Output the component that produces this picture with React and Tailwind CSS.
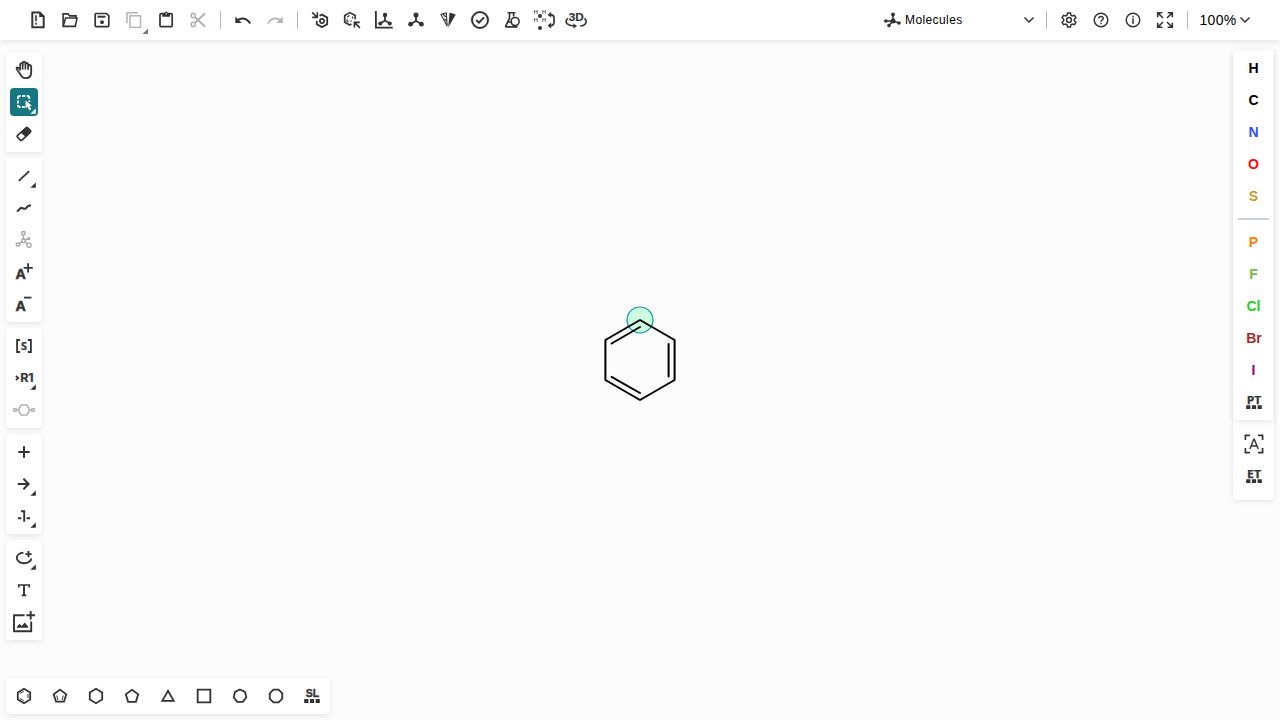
import React from "react";

const DARK = "#333333";
const GRAY = "#b4b4b4";

function Icon({ children, color = DARK, w = 2, size = "size-8" }) {
  return (
    <svg
      viewBox="-16 -16 32 32"
      className={`${size} shrink-0 overflow-visible`}
      fill="none"
      stroke={color}
      strokeWidth={w}
    >
      {children}
    </svg>
  );
}

function Corner({ color = DARK }) {
  return <path d="M11.8 6.5V11.8H6.3Z" fill={color} stroke="none" />;
}

function Glyph({ x = 0, y, size, children, weight = 700, family = "Open Sans", width, bold = 0.25 }) {
  return (
    <text
      x={x}
      y={y}
      fontSize={size}
      fontWeight={weight}
      fontFamily={`"${family}", sans-serif`}
      textAnchor="middle"
      textLength={width}
      lengthAdjust="spacingAndGlyphs"
      fill={DARK}
      stroke={bold ? DARK : "none"}
      strokeWidth={bold}
      opacity="0.99"
    >
      {children}
    </text>
  );
}

function Dots({ y = 4.2 }) {
  return (
    <path
      d={`M-7.8 ${y}h4.2v3.8h-4.2zM-2.1 ${y}h4.2v3.8h-4.2zM3.6 ${y}h4.2v3.8h-4.2z`}
      fill={DARK}
      stroke="none"
    />
  );
}

const Divider = () => <div className="h-[18px] w-px shrink-0 bg-[#aeb6dc]" />;

function Chevron() {
  return (
    <svg viewBox="0 0 12 8" className="h-2 w-3 shrink-0" fill="none" stroke={DARK} strokeWidth="1.5">
      <path d="M1.5 1.5 6 6l4.5-4.5" />
    </svg>
  );
}

function TopBar() {
  return (
    <header className="flex h-10 shrink-0 items-center bg-white pl-[22px] shadow-[0_2px_5px_rgba(103,104,132,0.15)]">
      <Icon>
        <path d="M-5.7-7.5H1.7L5.7-3.5V7.2H-5.7Z" />
        <path d="M1.2-8V-3H6.4Z" fill={DARK} stroke="none" />
        <path d="M-2-4.8V1.3M-2 2.7V4.8" strokeWidth="1.6" />
      </Icon>
      <Icon w={1.6}>
        <path d="M-6.9 5.8V-6.1H-2L-.3-4.1H6V-1.9" />
        <path d="M-6.8 6.4-4.4-2H7L5.3 6.4Z" />
      </Icon>
      <Icon w={1.7}>
        <path d="M-5.8-6.5H4.4L6.8-4.1V5.4Q6.8 6.7 5.5 6.7H-5.5Q-6.8 6.7-6.8 5.4V-5.5Q-6.8-6.5-5.8-6.5Z" />
        <path d="M-4.5-3.3H3.5" strokeWidth="2" />
        <circle cx="0" cy="2.2" r="1.9" fill={DARK} stroke="none" />
      </Icon>
      <Icon color={GRAY} w={1.5}>
        <path d="M-7 3.2V-7.2H3.8" />
        <rect x="-4" y="-4.2" width="10.5" height="11.6" />
        <path d="M14 8.5V14H8.5Z" fill="#777" stroke="none" />
      </Icon>
      <Icon w={1.7}>
        <rect x="-6" y="-6.3" width="12.2" height="12.9" rx="1" />
        <path d="M-3.8-6.8H-1.5Q-1.2-8.5.1-8.5T1.7-6.8H4V-3.3H-3.8Z" fill={DARK} stroke="none" />
        <circle cx=".1" cy="-6.2" r=".8" fill="white" stroke="none" />
      </Icon>
      <Icon color={GRAY} w={1.6}>
        <circle cx="-4.7" cy="-4.4" r="2.2" />
        <circle cx="-4.7" cy="4.4" r="2.2" />
        <path d="M-3-2.7 7.2 6.7M-3 2.7 7.2-6.7" strokeWidth="2" />
      </Icon>
      <div className="ml-1.5"><Divider /></div>
      <div className="ml-[6px] flex">
        <Icon w={2}>
          <path d="M-6 .4Q1.5-4.6 7.2 3.4" />
          <path d="M-7.7-3.4V3.1H-1.2Z" fill={DARK} stroke="none" />
        </Icon>
        <Icon color={GRAY} w={1.7}>
          <path d="M6 .4Q-1.5-4.6-7.2 3.4" />
          <path d="M7.7-3.4V3.1H1.2Z" fill={GRAY} stroke="none" />
        </Icon>
      </div>
      <div className="ml-1.5"><Divider /></div>
      <div className="ml-[6px] flex">
        <Icon w={1.8}>
          <path d="M-.5-4.2 2-5.4 7.2-2.4V4.2L2 7.1-3.2 4.2V1" />
          <circle cx="2" cy="1" r="2.1" strokeWidth="1.7" />
          <path d="M-7.8-7.6-3.4-3.2M-7.8-2.6H-2.7V-7.8" strokeWidth="1.6" />
        </Icon>
        <Icon w={1.7}>
          <path d="M3.2-.8V-4.5L-2.2-7.4-7.3-4.5V2.2L-2.2 5-.6 4.1" />
          <path d="M-4.9-2.9-2.5-4.4M-4.9-.8V1.1L-3.4 2.1M-1.6 1.6-.4.8M.6-3.6V-1.4" strokeWidth="1.2" />
          <path d="M7.9 7.9 3.2 3.2M2.4 7.6V2.3H7.8" />
        </Icon>
        <Icon w={1.8}>
          <path d="M-8.1-9V7.7H8.8" />
          <path d="M1-5V.5L-3.6 3.2M1 .5 5.5 3.2" />
          <g fill={DARK} stroke="none"><circle cx="1" cy="-5.1" r="2.2" /><circle cx="-3.8" cy="3.4" r="2" /><circle cx="5.8" cy="3.4" r="2" /></g>
        </Icon>
        <Icon w={1.9}>
          <path d="M0-5V1L-5.4 4M0 1 5.4 4" />
          <g fill={DARK} stroke="none"><circle cx="0" cy="-5" r="2.5" /><circle cx="-5.4" cy="4.2" r="2.4" /><circle cx="5.4" cy="4.2" r="2.4" /></g>
        </Icon>
        <Icon w={1.1}>
          <path d="M-7-5.6-.8 6.2-1.7-7Z" />
          <path d="M-5-6-2.2-3M-3.6-1.2-1.4 1" />
          <path d="M1.6-7.5 7.8-5.6.2 7.4Z" fill={DARK} stroke="none" />
        </Icon>
        <Icon w={2}>
          <circle cx="0" cy="0" r="8" />
          <path d="M-3.8 0-1 2.7 4-2.6" />
        </Icon>
        <Icon w={1.6}>
          <path d="M-4.4-7.3H3.4M-2.5-7V-1.8L-6.3 6.1Q-6.5 6.9-5.6 6.9H5.5M1.6-7V-3.5" />
          <circle cx="3.1" cy="1.5" r="4" />
          <path d="M-4 2H-1M1 5.2 4 7" />
        </Icon>
        <Icon w={1.7}>
          {[[-8.2, -6], [-.1, -6], [-8.2, 2], [-.1, 2]].map(([x, y]) => (
            <Glyph key={`${x},${y}`} x={x} y={y} size={6} weight={400} bold={0.15}>H</Glyph>
          ))}
          <circle cx="-4" cy="-4" r="2" fill={DARK} stroke="none" />
          <circle cx="-4" cy="8" r="2" fill={DARK} stroke="none" />
          <path d="M5.2-5.2H7Q10-5.2 10-2V2Q10 5.6 6.8 5.6H5.6" />
          <path d="M7.2-8.2V-2.2L3.6-5.2ZM7.2 2.6V8.6L3.6 5.6Z" fill={DARK} stroke="none" />
        </Icon>
        <Icon w={1.6}>
          <Glyph x={.3} y={0.6} size={11.8} family="Liberation Sans" width={15} bold={0.2}>3D</Glyph>
          <path d="M-8.2-1.6C-12.8 2.5-7.8 5.8-2.2 6M8.4-1.6C12.8 2.5 8.4 5.8 4.2 6" />
          <path d="M-2.6 3.4 1 6-2.6 8.6Z" fill={DARK} stroke="none" />
        </Icon>
      </div>
      <div className="flex-1" />
      <div className="flex w-[153px] items-center pl-[1px]">
        <svg viewBox="-9 -9 18 18" className="-mr-px size-[18px] shrink-0 overflow-visible" fill={DARK} stroke={DARK} strokeWidth="1.5">
          <path d="M1-5.5V1L-6 1M1 1-3 5.3M1 1 7 3" fill="none" />
          <g stroke="none"><circle cx="1" cy="-5.5" r="1.9" /><circle cx="-6.2" cy="1" r="1.8" /><circle cx="1" cy="1" r="2.5" /><circle cx="-3" cy="5.6" r="1.8" /><circle cx="7" cy="3" r="1.8" /></g>
        </svg>
        <span className="ml-[5px] font-['Liberation_Sans',sans-serif] text-[12px] leading-5 tracking-[0.4px] text-black">Molecules</span>
        <div className="ml-auto flex"><Chevron /></div>
      </div>
      <div className="ml-[11px]"><Divider /></div>
      <div className="ml-[6px] flex">
        <Icon w={1.5}>
          <path d="M-1.4-7H1.4L2-4.8 3.3-4.1 5.5-4.7 6.9-2.3 5.3-.7V.7L6.9 2.3 5.5 4.7 3.3 4.1 2 4.8 1.4 7H-1.4L-2 4.8-3.3 4.1-5.5 4.7-6.9 2.3-5.3.7V-.7L-6.9-2.3-5.5-4.7-3.3-4.1-2-4.8Z" />
          <circle cx="0" cy="0" r="2.4" />
        </Icon>
        <Icon w={1.5}>
          <circle cx="0" cy="0" r="6.8" />
          <path d="M-2.2-1.5Q-2.2-3.6 0-3.6T2.2-1.6C2.2 0 0 0 0 1.7M0 2.7V4.3" />
        </Icon>
        <Icon w={1.4}>
          <circle cx="0" cy="0" r="6.8" />
          <path d="M0-1.8V4M0-4.2V-2.8" strokeWidth="1.5" />
        </Icon>
        <Icon w={1.6}>
          <path d="M-7.3-2.7V-7.3H-2.7M-7-7-2-2M2.7-7.3H7.3V-2.7M7-7 2-2M7.3 2.7V7.3H2.7M7 7 2 2M-2.7 7.3H-7.3V2.7M-7 7-2 2" />
        </Icon>
      </div>
      <div className="ml-[6px]"><Divider /></div>
      <div className="ml-[11.5px] mr-[29.5px] flex items-center">
        <span className="w-[39px] font-['Liberation_Sans',sans-serif] text-[14px] leading-5 tracking-[0.3px] text-black">100%</span>
        <Chevron />
      </div>
    </header>
  );
}

const Panel = ({ children }) => (
  <div className="flex w-9 flex-col items-center rounded-[4px] bg-white py-0.5 shadow-[0_2px_5px_rgba(103,104,132,0.15)]">
    {children}
  </div>
);

function LeftTools() {
  return (
    <aside className="flex w-9 flex-col gap-1.5">
      <Panel>
        <Icon w={1.8}>
          <path d="M-4.2 3.4-7-.6Q-8-2.2-6.6-2.6-5.4-2.6-3.8-.2V-5.7Q-3.5-7-2.4-6.9-1.4-6.8-1.3-5.5V-7Q-1.1-8.3.1-8.3 1.3-8.2 1.4-6.7V-5.6Q1.7-7.1 2.9-7 4-6.8 4.1-5.4V-3.8Q4.4-5.1 5.5-5 7.2-4.8 7.2-3.3V2.6Q7 8.2 1.2 8.2-2 8.1-4.2 3.4Z" strokeLinejoin="round" />
          <path d="M-1.3-5.5V-.6M1.4-5.6V-.6M4.1-4V-.3" strokeWidth="1.6" />
        </Icon>
        <div className="my-0.5 flex size-7 items-center justify-center rounded-[4px] bg-[#167782]">
          <Icon color="white" w={1.8}>
            <path d="M-6.1-3V-4Q-6.1-6-4-6H-3.4M-1.9-6H1.3M2.8-6H3.3Q5.3-6 5.3-4V-3M-6.1-1.4V1.4M-6.1 3V3.3Q-6.1 5-4.2 5H-3.4M-1.9 5H.8M5.3-1.6V0" />
            <path d="M1.6-1.6V6.4L3.6 4.8 5.3 8.2 7.2 7.2 5.6 4 8 3.7Z" fill="white" stroke="none" />
            <Corner color="white" />
          </Icon>
        </div>
        <Icon w={1.6}>
          <path d="M2-6.2Q2.8-7 3.6-6.2L6.5-3.4Q7.2-2.6 6.4-1.8L-2 6.1Q-2.8 6.9-3.6 6.1L-6.6 3.2Q-7.3 2.4-6.6 1.6Z" />
          <path d="M-3.2-1.3 1.4-6.2Q2.8-7.5 4-6.3L6.7-3.8Q7.7-2.6 6.6-1.4L2 3.3Z" fill={DARK} stroke="none" />
        </Icon>
      </Panel>
      <Panel>
        <Icon w={1.8}><path d="M-5.2 4.9 5.2-4.8" /><Corner /></Icon>
        <Icon w={2}><path d="M-6.9 3.6-3.6.3Q-2.9-.4-2 0L.1.7Q1 1 1.7.4L3.5-1.5Q4.2-2.2 5-2.3L7-2.7" /></Icon>
        <Icon color="#a0a0a0" w={1.3}>
          <circle cx="-.5" cy="-6.7" r="1.8" /><circle cx="-.5" cy=".8" r="1.8" /><circle cx="-6" cy="4.6" r="1.8" /><circle cx="5" cy="5.2" r="2.1" /><circle cx="4.7" cy="-1.4" r="1" />
          <path d="M-.5-4.9V-1M-2 1.8-4.5 3.5M1 1.9 3.4 3.7M1.1.1 3.8-1.1" />
        </Icon>
        <Icon><Glyph x={-3.4} y={6.8} size={13.8} width={9.8} bold={0.4}>A</Glyph><path d="M4.1-8.8V.5M-.4-4.2H8.8" strokeWidth="1.8" /></Icon>
        <Icon><Glyph x={-3.4} y={6.8} size={13.8} width={9.8} bold={0.4}>A</Glyph><path d="M0-6.4H7.4" strokeWidth="1.8" /></Icon>
      </Panel>
      <Panel>
        <Icon w={1.8}><path d="M-3.9-6H-6.9V6H-3.9M3.9-6H6.9V6H3.9" /><Glyph y={4} size={11} width={6}>S</Glyph></Icon>
        <Icon w={1.8}><path d="M-8-2.2-5.8 0-8 2.2" /><Glyph x={2.9} y={4.4} size={12} width={13.5} family="Inter" bold={0.2}>R1</Glyph><Corner /></Icon>
        <Icon color={GRAY} w={1.7}><path d="M-5.6 0-2.9-5H2.9L5.6 0 2.9 5H-2.9Z" /><circle cx="-8.9" cy="0" r="1.5" /><circle cx="8.9" cy="0" r="1.5" /><path d="M-7.3 0h2M7.3 0h-2" /></Icon>
      </Panel>
      <Panel>
        <Icon w={2}><path d="M0-5.7V5.7M-5.7 0H5.7" /></Icon>
        <Icon w={2}><path d="M-6.2 0H4.2M-.6-5.2 4.6 0-.6 5.2" /><Corner /></Icon>
        <Icon w={1.9}><path d="M-3-4.7H.2V5.8M-6 2.3h3.4M2.6 2.3H6" /><Corner /></Icon>
      </Panel>
      <Panel>
        <Icon w={1.9}><path d="M-.6-5.2C-4.6-5-7.2-2.8-7.2 0S-4 5.2 0 5.2 7.4 3 7.1.4" /><path d="M4.5-7V-.8M1.4-3.9H7.6" /><Corner /></Icon>
        <Icon w={1.6}><path d="M-5.2-2.4V-5H5.2V-2.4M-2.3 5.4H2.3" /><path d="M0-5V5.2" strokeWidth="1.9" /></Icon>
        <Icon w={1.9}><path d="M.6-6.8H-10V9.2H7.2V-.5M6.7-11V-2.6M2.4-6.8H11" strokeLinejoin="round" /><path d="M-7 5.8V4.4L-4.3 1.8-2.4 3.9.8.6 4 4.4V5.8Z" fill={DARK} stroke="none" /></Icon>
      </Panel>
    </aside>
  );
}

function RightTools() {
  const common = [["H", "text-black"], ["C", "text-black"], ["N", "text-[#304ff7]"], ["O", "text-[#ff0d0d]"], ["S", "text-[#c99a19]"]];
  const other = [["P", "text-[#ff8000]"], ["F", "text-[#78bc42]"], ["Cl", "text-[#1fd01f]"], ["Br", "text-[#a62929] pl-px"], ["I", "text-[#940094]"]];
  const atom = ([label, color]) => (
    <div key={label} className={`flex h-8 items-center justify-center font-['Liberation_Sans',sans-serif] text-[14px] font-bold ${color}`}>{label}</div>
  );
  return (
    <aside className="h-[450px] w-[41px] rounded-[4px] bg-white shadow-[0_2px_5px_rgba(103,104,132,0.15)]">
      <div className="flex h-[370px] flex-col rounded-[4px] pt-0.5 shadow-[0_2px_5px_rgba(103,104,132,0.15)]">
        {common.map(atom)}
        <div className="mx-[5px] mb-[6px] mt-[6px] h-[2px] bg-[#cad3dd]" />
        {other.map(atom)}
        <div className="flex justify-center"><Icon><Glyph y={1.5} size={11.4} width={14.5}>PT</Glyph><Dots y={3.3} /></Icon></div>
      </div>
      <div className="flex flex-col items-center pt-2">
        <Icon w={1.7}><path d="M-8.6-4V-8.6H-4M4-8.6H8.6V-4M8.6 4V8.6H4M-4 8.6H-8.6V4" /><path d="M-4.1 5.1-.2-4.8H.3L4.2 5.1M-2.8 2H2.8" strokeWidth="1.4" /></Icon>
        <Icon><Glyph y={1.5} size={11.4} width={14}>ET</Glyph><Dots y={3.3} /></Icon>
      </div>
    </aside>
  );
}

function Templates() {
  const cells = [
    <><path d="M0-7.2 6.2-3.6V3.6L0 7.2-6.2 3.6V-3.6Z" /><path d="M-4-2.5-.2-4.8M4-2.2V2.2M-4 2.5-.2 4.8" strokeWidth="1" /></>,
    <><path d="M0-6.4 6.3-1.7 4 5.7H-4L-6.3-1.7Z" /><path d="M-3.2-.5-2.2 4M3.2-.5 2.2 4" strokeWidth="1" /></>,
    <path d="M0-7.2 6.2-3.6V3.6L0 7.2-6.2 3.6V-3.6Z" />,
    <path d="M0-6.2 6.2-1.7 3.9 5.8H-3.9L-6.2-1.7Z" />,
    <path d="M0-5.2 5.7 4.8H-5.7Z" />,
    <path d="M-6.3-6.3H6.3V6.3H-6.3Z" />,
    <path d="M0-6.5 5-4.1 6.3 1.3 2.9 5.8H-2.9L-6.3 1.3-5-4.1Z" />,
    <path d="M-2.6-6.3H2.6L6.3-2.6V2.6L2.6 6.3H-2.6L-6.3 2.6V-2.6Z" />,
    <><Glyph x={.5} y={.9} size={11} family="Liberation Sans" width={13.4} bold={0.4}>SL</Glyph><Dots y={3.1} /></>,
  ];
  return (
    <footer className="flex h-9 w-[324px] items-center rounded-[4px] bg-white shadow-[0_2px_5px_rgba(103,104,132,0.15)]">
      {cells.map((c, i) => <div key={i} className="flex w-9 justify-center"><Icon w={1.8}>{c}</Icon></div>)}
    </footer>
  );
}

function Molecule() {
  return (
    <svg viewBox="590 300 100 120" className="h-[120px] w-[100px]" fill="none" stroke="black" strokeWidth="2" strokeLinecap="round" strokeLinejoin="round">
      <circle cx="640" cy="320" r="13" fill="#ccffdd" stroke="#0097a8" strokeWidth="1.2" />
      <path d="M640 320 674.6 340V380L640 400 605.4 380V340Z" />
      <path d="M611.6 343.5 640 327M668.6 344V376.5M611.6 376.8 640 393" />
    </svg>
  );
}

export default function App() {
  return (
    <div className="flex h-[720px] w-[1280px] flex-col overflow-hidden bg-[#fcfcfc]">
      <TopBar />
      <div className="flex flex-1 flex-col px-1.5 pb-1.5">
        <main className="flex flex-1 items-start justify-between">
          <div className="pt-3"><LeftTools /></div>
          <div className="flex flex-1 justify-center pl-[5px] pt-[260px]"><Molecule /></div>
          <div className="pt-2.5"><RightTools /></div>
        </main>
        <Templates />
      </div>
    </div>
  );
}
